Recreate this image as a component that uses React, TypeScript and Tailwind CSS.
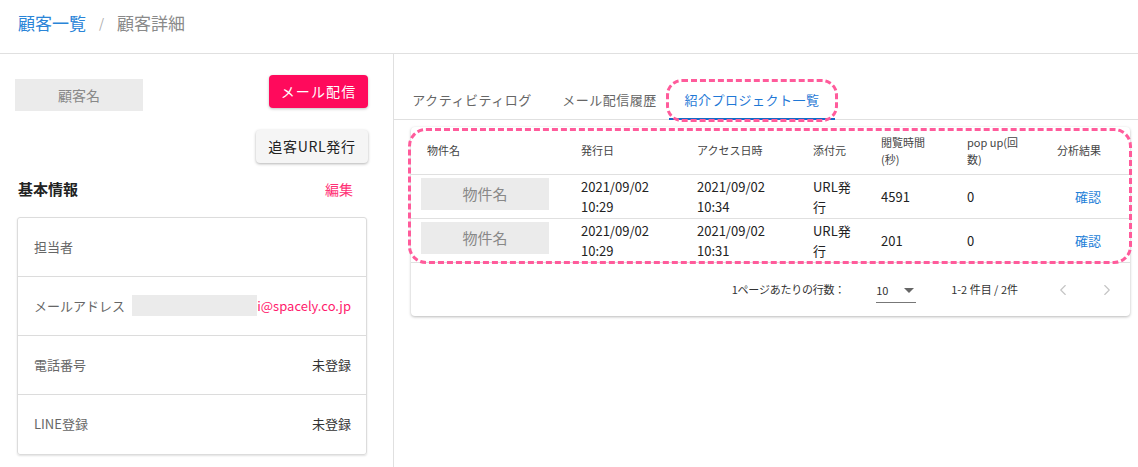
import { ChevronLeft, ChevronRight } from 'lucide-react';

const rows = [
  { issued: ['2021/09/02', '10:29'], accessed: ['2021/09/02', '10:34'], time: '4591', popup: '0' },
  { issued: ['2021/09/02', '10:29'], accessed: ['2021/09/02', '10:31'], time: '201', popup: '0' },
];

const cols = 'grid grid-cols-[154px_116px_116px_68px_86px_1fr_auto] pl-[16px] pr-[29px]';

function InfoRow({ label, children, last }: { label: string; children?: React.ReactNode; last?: boolean }) {
  return (
    <div
      className={`flex h-[59px] items-center justify-between pl-[16px] pr-[15px] ${
        last ? '' : 'border-b border-[#dcdcdc]'
      }`}
    >
      <span className="text-[13px] text-[#666]">{label}</span>
      {children}
    </div>
  );
}

export default function App() {
  return (
    <div className="h-[467px] w-[1138px] overflow-hidden bg-white font-['Noto_Sans_CJK_JP',sans-serif] text-[#333]">
      <header className="flex h-[54px] items-start gap-[13px] border-b border-[#e0e0e0] pl-[18px] pt-[10px] text-[17px] leading-[26px]">
        <span className="text-[#2a85d8]">顧客一覧</span>
        <span className="text-[13px] leading-[26px] text-[#aaa]">/</span>
        <span className="text-[#8a8a8a]">顧客詳細</span>
      </header>

      <div className="flex h-[413px]">
        {/* 左カラム */}
        <div className="w-[394px] shrink-0 border-r border-[#e0e0e0] pl-[15px] pr-[25px]">
          <div className="mt-[21px] flex items-start justify-between">
            <div className="mt-[4px] flex h-[32px] w-[128px] items-center justify-center bg-[#ebebeb] text-[14px] text-[#888]">
              顧客名
            </div>
            <button className="h-[33px] w-[99px] rounded-[4px] bg-[#ff0a5c] text-[14px] tracking-[0.08em] text-white shadow-[0_1px_3px_rgba(0,0,0,0.25)]">
              メール配信
            </button>
          </div>
          <div className="mt-[19px] flex justify-end">
            <button className="h-[33px] w-[112px] rounded-[4px] bg-[#f5f5f5] text-[14px] tracking-[0.05em] text-[#222] shadow-[0_1px_3px_rgba(0,0,0,0.3)]">
              追客URL発行
            </button>
          </div>
          <div className="mt-[15px] flex items-center justify-between pl-[3px] pr-[15px]">
            <span className="text-[15px] font-bold text-[#222]">基本情報</span>
            <span className="text-[14px] text-[#ff2f75]">編集</span>
          </div>
          <div className="ml-[2px] mt-[16px] w-[350px] rounded-[3px] border border-[#dcdcdc] shadow-[0_1px_2px_rgba(0,0,0,0.12)]">
            <InfoRow label="担当者" />
            <InfoRow label="メールアドレス">
              <div className="flex items-center">
                <div className="h-[21px] w-[125px] bg-[#ebebeb]" />
                <span className="text-[13px] text-[#ff1a6c]">i@spacely.co.jp</span>
              </div>
            </InfoRow>
            <InfoRow label="電話番号">
              <span className="text-[13px] text-[#333]">未登録</span>
            </InfoRow>
            <InfoRow label="LINE登録" last>
              <span className="text-[13px] text-[#333]">未登録</span>
            </InfoRow>
          </div>
        </div>

        {/* 右カラム */}
        <div className="flex-1">
          <div className="mt-[26px] flex h-[40px] border-b border-[#e0e0e0]">
            <div className="flex w-[156px] items-center justify-center text-[13px] tracking-[0.04em] text-[#666]">
              アクティビティログ
            </div>
            <div className="flex w-[119px] items-center justify-center text-[13px] tracking-[0.04em] text-[#666]">
              メール配信履歴
            </div>
            <div className="relative flex w-[166px] items-center justify-center text-[13px] tracking-[0.04em] text-[#1f78d6]">
              紹介プロジェクト一覧
              <div className="absolute bottom-[-1px] left-0 right-0 h-[2px] bg-[#1469c7]" />
              <div className="absolute -bottom-[3px] -left-[3px] -right-[3px] -top-[1px] rounded-[16px] border-[3px] border-dashed border-[#ff5b9b]" />
            </div>
          </div>

          <div className="ml-[17px] mr-[8px] mt-[7px] rounded-[4px] bg-white shadow-[0_1px_3px_rgba(0,0,0,0.28)]">
            <div className="relative">
              <div className={`${cols} h-[48px] items-center border-b border-[#e0e0e0] text-[11px] leading-[17px] text-[#444]`}>
                <span>物件名</span>
                <span>発行日</span>
                <span>アクセス日時</span>
                <span>添付元</span>
                <span>
                  閲覧時間
                  <br />
                  (秒)
                </span>
                <span>
                  pop up(回
                  <br />
                  数)
                </span>
                <span className="text-right">分析結果</span>
              </div>
              {rows.map((r, i) => (
                <div
                  key={i}
                  className={`${cols} h-[44px] items-center border-b border-[#e0e0e0] text-[13px] leading-[20px] text-[#222]`}
                >
                  <div className="-ml-[6px] mt-[3px] flex h-[32px] w-[128px] items-center justify-center self-start bg-[#ebebeb] text-[15px] text-[#888]">
                    物件名
                  </div>
                  <span>
                    {r.issued[0]}
                    <br />
                    {r.issued[1]}
                  </span>
                  <span>
                    {r.accessed[0]}
                    <br />
                    {r.accessed[1]}
                  </span>
                  <span>
                    URL発
                    <br />行
                  </span>
                  <span>{r.time}</span>
                  <span>{r.popup}</span>
                  <span className="text-right text-[#1e7fd8]">確認</span>
                </div>
              ))}
              <div className="pointer-events-none absolute -bottom-[1px] -left-[3px] -right-[2px] top-[1px] rounded-[18px] border-[3px] border-dashed border-[#ff5b9b]" />
            </div>
            <div className="flex h-[53px] items-center justify-end pr-[14px] text-[11px] text-[#333]">
              <span className="tracking-[-0.02em]">1ページあたりの行数：</span>
              <div className="ml-[31px] flex h-[26px] w-[40px] items-center justify-between border-b border-[#777] pt-[2px]">
                <span className="text-[11px]">10</span>
                <svg width="10" height="5" viewBox="0 0 10 5" className="mr-[2px]">
                  <path d="M0 0h10L5 5z" fill="#666" />
                </svg>
              </div>
              <span className="ml-[35px]">1-2 件目 / 2件</span>
              <ChevronLeft className="ml-[36px] h-[18px] w-[18px] text-[#c4c4c4]" strokeWidth={1.5} />
              <ChevronRight className="ml-[26px] h-[18px] w-[18px] text-[#c4c4c4]" strokeWidth={1.5} />
            </div>
          </div>
        </div>
      </div>
    </div>
  );
}
